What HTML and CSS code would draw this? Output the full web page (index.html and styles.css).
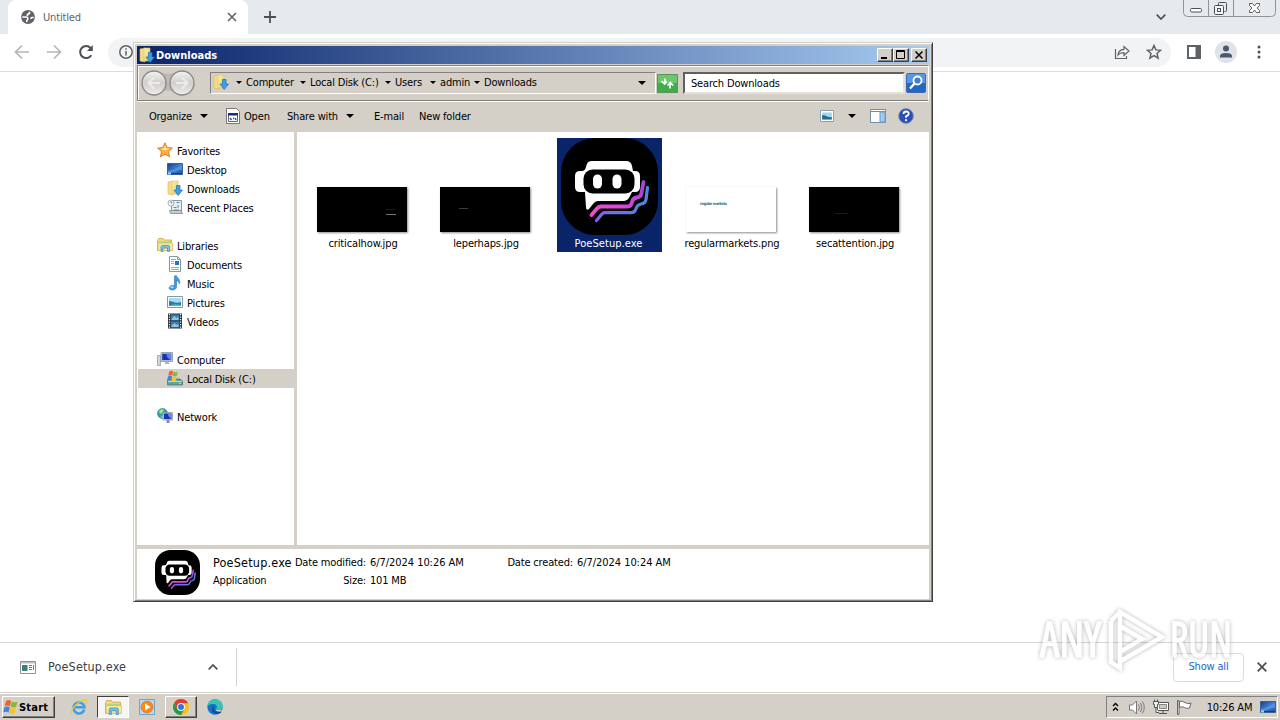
FILE: index.html
```html
<!DOCTYPE html>
<html lang="en">
<head>
  <meta charset="UTF-8">
  <title>Untitled</title>
  <link rel="stylesheet" href="styles.css">
</head>
<body>
  <!-- shared icons -->
  <svg class="defs" width="0" height="0">
    <defs>
      <linearGradient id="gFolder" x1="0" x2="1" y1="0" y2="1"><stop offset="0" stop-color="#fdf3b5"/><stop offset="1" stop-color="#e9c75c"/></linearGradient>
      <linearGradient id="gBlue" x1="0" x2="1" y1="0" y2="1"><stop offset="0" stop-color="#173b8c"/><stop offset=".5" stop-color="#3f7fd0"/><stop offset="1" stop-color="#1c51a8"/></linearGradient>
      <linearGradient id="gPoe" gradientUnits="userSpaceOnUse" x1="30" x2="88" y1="0" y2="0"><stop offset="0" stop-color="#f24bd0"/><stop offset=".6" stop-color="#d845e0"/><stop offset="1" stop-color="#9248d0"/></linearGradient>
      <linearGradient id="gPoe2" gradientUnits="userSpaceOnUse" x1="32" x2="88" y1="0" y2="0"><stop offset="0" stop-color="#8a5cf0"/><stop offset="1" stop-color="#4a8bd8"/></linearGradient>
      <symbol id="downloads" viewBox="0 0 16 16">
        <path d="M1 2l5-1v14l-5-1z" fill="#f4dd86" stroke="#d9b54c" stroke-width=".6"/>
        <path d="M5 1h6v13H5z" fill="url(#gFolder)" stroke="#dcc067" stroke-width=".6"/>
        <path d="M9.500 5.500h3.500v4.500h2.500L11.200 15.500 7 10h2.500z" fill="#3aa0e8" stroke="#1d6fb8" stroke-width=".7"/>
      </symbol>
      <symbol id="desktop" viewBox="0 0 16 16">
        <path d="M.5 2.500h15v11H.5z" fill="url(#gBlue)" stroke="#3b5f9a"/>
        <path d="M1 10c5 0 9-3 14-6v5C10 9 6 11 1 12z" fill="#6fb0ee" opacity=".5"/>
        <path d="M1 12.500h14" stroke="#1c3d78"/><path d="M1 11.500h3v2H1z" fill="#a4d0f4"/>
      </symbol>
      <symbol id="star" viewBox="0 0 16 16">
        <path d="M8 .8l2.200 4.700 5.200.6-3.900 3.500 1.100 5.200L8 12.200l-4.600 2.600 1.100-5.200L.6 6.100l5.200-.6z" fill="#fbb13c" stroke="#d9761a" stroke-width=".9"/>
        <path d="M8 3l1.300 3.300 3.500.5L8 8.500 3.500 6.800l3.200-.5z" fill="#ffe49a"/>
      </symbol>
      <symbol id="recent" viewBox="0 0 16 16">
        <path d="M4.500 1.500h10v12h-10z" fill="#e9eef0" stroke="#8d989e"/>
        <path d="M2.500 11.500h11.500l1.500 3H3.500z" fill="#c5cdd0" stroke="#7f8a90" stroke-width=".8"/>
        <path d="M9.500 3.500h3M6.500 8.500h3M11 6v3M7 11h5" stroke="#5e88a4"/>
        <circle cx="4" cy="4" r="3" fill="#f6fafc" stroke="#8ea2ae" stroke-width=".8"/><path d="M4 2v2h1.500" stroke="#456" stroke-width=".7" fill="none"/>
      </symbol>
      <symbol id="library" viewBox="0 0 16 16">
        <path d="M.6 3.500l1-2h4.500l1 1.500h7.500v10.500H.6z" fill="#f2dc80" stroke="#c9a440" stroke-width=".8"/>
        <path d="M2 4.500h12v3H2z" fill="#a5d98e"/><path d="M1 6h14.500v7.500H1z" fill="#f8e79d" stroke="#d5b657" stroke-width=".6"/>
        <path d="M4 14.500V10q0-1.500 1.500-1.500h5.500q1.500 0 1.500 1.500v4.500h-2V11h-4.500v3.500z" fill="#7cc3ee" stroke="#3b86bd" stroke-width=".7"/>
      </symbol>
      <symbol id="document" viewBox="0 0 16 16">
        <path d="M2.500.5h8l3 3v12h-11z" fill="#fdfefe" stroke="#7d9aa8"/>
        <path d="M10.500.5v3h3" fill="none" stroke="#7d9aa8"/>
        <path d="M4 3.500h5M4 5.500h3M4 7.500h3M4 11.500h8M4 13.500h8" stroke="#8ab0cd"/><path d="M8 5h4v4H8z" fill="#2f6fb4"/>
      </symbol>
      <symbol id="music" viewBox="0 0 16 16">
        <path d="M7.500 1l1.800-.5c.5 2.500 4.500 3.500 3.200 8.500-.3-2-1.500-3-3-3.500v6.200c0 1.800-1.500 3.300-4 3.300C3 15 2 14 2.200 12.700c.3-1.700 2.800-2.700 5.300-2z" fill="#3a9de6" stroke="#1f6fb8" stroke-width=".6"/>
        <ellipse cx="5" cy="12.300" rx="1.800" ry="1" fill="#a8daf8"/>
      </symbol>
      <symbol id="picture" viewBox="0 0 16 16">
        <path d="M.5 2.500h15v11H.5z" fill="#fff" stroke="#8298a4"/><path d="M2 4h12v8H2z" fill="#a5dcf2"/>
        <path d="M2 12V7c4 0 6 3 12 1v4z" fill="#287c9e"/><path d="M2 12c4-2 8-2 12-1v1z" fill="#4fb4c9"/>
      </symbol>
      <symbol id="video" viewBox="0 0 16 16">
        <path d="M1 .5h14v15H1z" fill="#27323c"/><path d="M4 1.500h8v6H4zM4 8.500h8v6H4z" fill="#3f7fb0"/>
        <path d="M4.500 6l3-3 2 2 2-1v3h-7zM4.500 13l3-3 2 2 2-1v3h-7z" fill="#8dc3e0"/>
        <path d="M2.500 1v14M13.500 1v14" stroke="#e8f0f4" stroke-width="1.300" stroke-dasharray="1.300 1.200"/>
      </symbol>
      <symbol id="computer" viewBox="0 0 16 16">
        <path d="M.5 4.500h3v10h-3z" fill="#d2d5d8" stroke="#8d9399" stroke-width=".7"/>
        <path d="M4 1.500h11.500v9H4z" fill="#cfd6de" stroke="#8a929c" stroke-width=".8"/><path d="M5.200 2.700h9v6.500h-9z" fill="#1a2fae"/>
        <path d="M9.500 2.700h4.700v6.500c-3-1-4.700-3-4.700-6.500z" fill="#5a80ea"/><path d="M8.500 10.500h3l1 2.500h-5z" fill="#adb4bc"/>
      </symbol>
      <symbol id="flag" viewBox="0 0 16 16">
        <path d="M3 2c2-1.200 3.500-1.200 5.200 0L7 7.500C5.500 6.300 3.500 6.300 1.700 7.300z" fill="#f0642a"/>
        <path d="M8.900 2.400c2 1 3.800 1 5.600 0l-1.300 5.400c-1.800 1-3.500 1-5.500 0z" fill="#7cbc3a"/>
        <path d="M1.500 8.200c1.800-1 3.700-1 5.300.1L5.500 13.700C4 12.600 2 12.600.2 13.500z" fill="#3f86dd"/>
        <path d="M7.500 8.600c2 1 3.700 1 5.500.1l-1.300 5.400c-1.800 1-3.500 1-5.500-.1z" fill="#fbc22c"/>
      </symbol>
      <symbol id="disk" viewBox="0 0 16 16">
        <path d="M1 9h12l2.500 2v4H.5v-4z" fill="#5ea79d" stroke="#5a6f74" stroke-width=".8"/><path d="M1 11.500h14" stroke="#b9dcd6"/>
        <svg x="0" y="0" width="12" height="12"><use href="#flag"/></svg><path d="M12 13.500h2" stroke="#9f6"/>
      </symbol>
      <symbol id="network" viewBox="0 0 16 16">
        <circle cx="5.500" cy="5.500" r="5" fill="#2f9fb8" stroke="#26788f" stroke-width=".6"/><path d="M2 3c2-2 4-2 5-1L5 5 3 6zM4 8l3-1 1 2-3 1z" fill="#a4e08a"/>
        <path d="M6 4.500h9.500v7.500H6z" fill="#c9d2dc" stroke="#87909a" stroke-width=".7"/><path d="M7 5.500h7.500v5.500H7z" fill="#1933b8"/><path d="M11 5.500h3.500v5.500c-2-1-3.500-3-3.500-5.500z" fill="#6b8df0"/>
        <path d="M9.500 12h3v3h-3z" fill="#7f8cab"/>
      </symbol>
      <symbol id="poe" viewBox="0 0 97 97">
        <rect width="97" height="97" rx="34" fill="#000"/>
        <path d="M30 23h35q5 0 6 5l1 5h2q5 0 5 5v11q0 5-5 5h-3l-2 4q-2 5-7 5H37q-3 0-5 3l-4 5q-3 2-3-2l-1-15h-5q-5 0-5-5V38q0-5 5-5h2q3 0 4-4 1-6 5-6z" fill="#fff"/>
        <rect x="22.500" y="31.500" width="51" height="24" rx="9" fill="#000"/>
        <rect x="32" y="36.500" width="9" height="14" rx="4.500" fill="#fff"/><rect x="51.500" y="36.500" width="9" height="14" rx="4.500" fill="#fff"/>
        <path d="M30.500 77l6-7q1.500-1.500 3.500-1.500h27q3 0 4-4.500 1-4 5-4.500 4-.5 4.500-4.500l2-11" fill="none" stroke="url(#gPoe)" stroke-width="3.800" stroke-linecap="round" stroke-linejoin="round"/>
        <path d="M35.500 82.500l5-6q1.500-1.800 3.500-1.800h26q4 0 5-4t5-4.700q4.500-.7 5-4.500l1.500-12" fill="none" stroke="url(#gPoe2)" stroke-width="3.200" stroke-linecap="round" stroke-linejoin="round"/>
      </symbol>
    </defs>
  </svg>

  <div class="screen">
    <div class="tabstrip">
      <div class="tab">
        <svg class="globe" width="14" height="14" viewBox="0 0 14 14"><circle cx="7" cy="7" r="6.900" fill="#5f6368"/><path d="M1.300 7h4q1.500 0 1.500 1.500v1l-1 1V12M8.500 1.800v1.500L6.500 4.500v1.500M9.500 8.500l1.500-1h1.700" fill="none" stroke="#fff" stroke-width="1.600"/></svg>
        <span class="tab-title">Untitled</span>
        <svg width="10" height="10" viewBox="0 0 10 10" stroke="#5f6368" stroke-width="1.600"><path d="M1 1l8 8M9 1L1 9"/></svg>
      </div>
      <svg class="newtab" width="12" height="12" viewBox="0 0 12 12" stroke="#4c5055" stroke-width="1.800"><path d="M6 0v12M0 6h12"/></svg>
      <svg class="tabsearch" width="10" height="6" viewBox="0 0 10 6" fill="none" stroke="#4c5055" stroke-width="1.700"><path d="M.7.7L5 5 9.300.7"/></svg>
      <svg class="winbtns" width="93" height="17" viewBox="0 0 93 17" fill="none" stroke="#8f949a">
        <path d="M.5 0v12.500q0 4 4 4h84q4 0 4-4V0M25.500 0v16M50.500 0v16"/>
        <rect x="7.500" y="8.500" width="11" height="3.500" rx="1.200" fill="#fff" stroke="#4a4f57"/>
        <path d="M35.500 5.500V3.500q0-1 1-1h6q1 0 1 1v7q0 1-1 1h-1" stroke="#4a4f57"/><rect x="31.500" y="5.500" width="9" height="9" rx="1" fill="#f6f7f9" stroke="#4a4f57"/><rect x="34.500" y="8.500" width="3" height="3" stroke="#4a4f57"/>
        <path d="M66.500 3.500h3l2 2.500 2-2.500h3v2l-2.500 2.500 2.500 2.500v2h-3l-2-2.500-2 2.500h-3v-2L69 8l-2.500-2.500z" fill="#fff" stroke="#4a4f57" stroke-width=".9"/>
      </svg>
    </div>

    <div class="toolbar">
      <svg width="16" height="16" viewBox="0 0 16 16" fill="none" stroke="#b4b7ba" stroke-width="1.700"><path d="M15 8H2M8 1.500L1.500 8 8 14.500"/></svg>
      <svg width="16" height="16" viewBox="0 0 16 16" fill="none" stroke="#b4b7ba" stroke-width="1.700"><path d="M1 8h13M8 1.500L14.500 8 8 14.500"/></svg>
      <svg width="16" height="16" viewBox="0 0 16 16" fill="none" stroke="#4c5055" stroke-width="2"><path d="M13.300 11.200A6 6 0 1 1 12.600 4"/><path d="M14.800 1v6H9z" fill="#4c5055" stroke="none"/></svg>
      <div class="omnibox">
        <svg width="14" height="14" viewBox="0 0 14 14" fill="none" stroke="#5f6368" stroke-width="1.500"><circle cx="7" cy="7" r="6.200"/><path d="M7 6v4.500M7 3.200v1.500"/></svg>
        <svg class="share" width="16" height="16" viewBox="0 0 16 16" fill="none" stroke="#5f6368" stroke-width="1.200"><path d="M1.500 5v9.500h11V12M4 11c.3-4 2.500-5.500 6-5.700V2.500L15 7l-5 4.500V8.600C7.500 8.500 5.500 9 4 11z"/></svg>
        <svg width="16" height="16" viewBox="0 0 16 16" fill="none" stroke="#5f6368" stroke-width="1.500"><path d="M8 1.500l1.900 4.400 4.700.4-3.600 3.100 1.100 4.700L8 11.600l-4.100 2.500L5 9.400 1.400 6.300l4.700-.4z"/></svg>
      </div>
      <svg class="panel" width="14" height="14" viewBox="0 0 14 14"><path d="M1 1h12v12H1z" fill="none" stroke="#5f6368" stroke-width="2"/><path d="M8.500 1H13v12H8.500z" fill="#5f6368"/></svg>
      <svg class="avatar" width="22" height="22" viewBox="0 0 22 22"><circle cx="11" cy="11" r="11" fill="#dfe2e7"/><circle cx="11" cy="7.500" r="3" fill="#4b5670"/><path d="M5 16.500v-1.500q0-3 6-3t6 3v1.500z" fill="#4b5670"/></svg>
      <svg class="dots" width="4" height="14" viewBox="0 0 4 14" fill="#4c5055"><circle cx="2" cy="2" r="1.500"/><circle cx="2" cy="7" r="1.500"/><circle cx="2" cy="12" r="1.500"/></svg>
    </div>

    <div class="page"></div>

    <div class="shelf">
      <div class="shelf-item">
        <svg width="16" height="13" viewBox="0 0 16 13"><path d="M.5.500h15v12H.5z" fill="#fff" stroke="#8c9296"/><path d="M1 1h14v1.500H1z" fill="#b7bec4"/><path d="M2 4h5.500v6H2z" fill="#3f7d7a"/><path d="M9 4.500h3M9 6.500h3M9 8.500h3M13.500 4v5" stroke="#777"/></svg>
        <span class="shelf-name">PoeSetup.exe</span>
        <svg width="10" height="6" viewBox="0 0 10 6" fill="none" stroke="#4c5055" stroke-width="1.700"><path d="M.7 5.300L5 1l4.300 4.300"/></svg>
      </div>
      <div class="show-all">Show all</div>
      <svg width="10" height="10" viewBox="0 0 10 10" stroke="#4c5055" stroke-width="1.800"><path d="M.7.7l8.600 8.600M9.300.7L.7 9.300"/></svg>
    </div>

    <div class="taskbar">
      <div class="start"><svg width="16" height="16"><use href="#flag"/></svg><b>Start</b></div>
      <div class="task ie"><svg width="18" height="16" viewBox="0 0 18 16" fill="none"><path d="M14.300 10.500A5.500 5.500 0 1 1 14.500 8.300H5" stroke="#3f9fe0" stroke-width="2.600"/><path d="M2 14.500C-1 12 9 0 16 1.200c2 .8 0 4-1 5" stroke="#f0c445" stroke-width="1.300"/></svg></div>
      <div class="task pressed"><svg width="17" height="17"><use href="#library"/></svg></div>
      <div class="task"><svg width="16" height="16" viewBox="0 0 16 16"><path d="M.5.500h15v15H.5z" fill="#b7d9f3" stroke="#6da3cf"/><circle cx="8" cy="8" r="6" fill="#f58a1f" stroke="#d76a0c" stroke-width=".6"/><path d="M6 4.500l5.500 3.500L6 11.500z" fill="#fff"/></svg></div>
      <div class="task raised"><svg width="16" height="16" viewBox="0 0 16 16"><circle cx="8" cy="8" r="8" fill="#fbc116"/><path d="M1.070 4A8 8 0 0 0 8 16l3.500-6L8 8 4.500 10z" fill="#229a48"/><path d="M8 4.300h7.100L14.930 4A8 8 0 0 0 1.070 4L4.500 10z" fill="#e33b2e"/><circle cx="8" cy="8" r="3.900" fill="#fff"/><circle cx="8" cy="8" r="3" fill="#2f77e8"/></svg></div>
      <div class="task"><svg width="16" height="16" viewBox="0 0 16 16"><circle cx="8" cy="8" r="7.700" fill="#1473c8"/><path d="M.5 7C1 2.500 4.500.3 8 .3c4.500 0 7.700 3 7.700 6.700 0 2.500-2 3.700-4 3.700-1.500 0-2.700-.7-2-1.700 1-2-1-4-3.500-4C4 5 1.500 5.500.5 7z" fill="#38c4b0"/><path d="M6.500 9c0 3 3 5 7 3.800 1-.3 1.200 0 .5.700-3.500 3-9 1-9-3.500 0-2 1-3 2.500-3.500-.6.600-1 1.500-1 2.500z" fill="#0c4b92"/><path d="M8.800 10c1.200 1.200 3.700 1.300 6 .2l-.8 2C10.500 13 8.500 12 8.800 10z" fill="#d4d0c8"/></svg></div>
      <div class="tray">
        <svg width="7" height="10" viewBox="0 0 7 10" fill="none" stroke="#000" stroke-width="1.400"><path d="M1 4l2.500-2.500L6 4M1 8.500L3.500 6 6 8.500"/></svg>
        <svg class="snd" width="16" height="15" viewBox="0 0 16 15" fill="none" stroke="#77797b"><path d="M.5 5h3l4-4v13l-4-4h-3z" fill="#fff"/><path d="M9.500 4.500q2 3 0 6M11.500 3q3 4.500 0 9M13.300 1.500q4 6 0 12"/></svg>
        <svg class="net" width="16" height="16" viewBox="0 0 16 16" stroke="#555"><path d="M4.500 3.500h11v8h-11z" fill="#fff"/><path d="M6.500 5.500h7v4h-7z" fill="#c9cbcb" stroke="#888"/><path d="M10 12v2M6 14.500h8" /><path d="M.5 2.500h5v3h-1v3h-3v-3h-1zM1.500.500v2M4.500.500v2M3 8.500v5h3" fill="#f2f2f2"/></svg>
        <svg class="flg" width="16" height="15" viewBox="0 0 16 15" stroke="#66686a" fill="#fff"><path d="M.5.500h1.500v14H.5zM2.500 1.500q3-1 5.500 1t6 .500l-1.500 5q-3 1-5-.5t-5 0z"/></svg>
        <span class="clock">10:26 AM</span>
        <svg width="16" height="16"><use href="#desktop"/></svg>
      </div>
    </div>

    <div class="window">
      <div class="titlebar">
        <svg width="16" height="16"><use href="#downloads"/></svg>
        <b>Downloads</b>
        <div class="wbtn"><svg width="12" height="12"><path d="M3 9h6" stroke="#000" stroke-width="2"/></svg></div>
        <div class="wbtn"><svg width="14" height="12"><path d="M2.500 1.500h8v8h-8zM2 2.500h9" fill="none" stroke="#000"/></svg></div>
        <div class="wbtn close"><svg width="14" height="12"><path d="M3.500 2.500l7 7M10.500 2.500l-7 7" stroke="#000" stroke-width="1.500"/></svg></div>
      </div>

      <div class="addressbar">
        <svg class="nav" width="56" height="28" viewBox="0 0 56 28"><defs><linearGradient id="gNav" x2="0" y2="1"><stop offset="0" stop-color="#f3f3f1"/><stop offset=".5" stop-color="#cfcecb"/><stop offset="1" stop-color="#efeeec"/></linearGradient></defs>
          <path d="M14 2q14 5 28 0v22q-14-5-28 0z" fill="#bdbab4"/>
          <g fill="url(#gNav)" stroke="#8b8985" stroke-width="1.300"><circle cx="14" cy="14" r="12"/><circle cx="42" cy="14" r="12"/></g>
          <g fill="none" stroke="#ececea" stroke-width="2"><path d="M20 14H9M14 8.500L8.500 14l5.500 5.500M36 14h11M42 8.500l5.500 5.500-5.500 5.500"/></g></svg>
        <div class="crumbs">
          <svg width="16" height="16"><use href="#downloads"/></svg>
          <i class="arrow a0"></i><span class="c1">Computer</span>
          <i class="arrow"></i><span class="c2">Local Disk (C:)</span>
          <i class="arrow"></i><span class="c3">Users</span>
          <i class="arrow"></i><span class="c4">admin</span>
          <i class="arrow"></i><span class="c5">Downloads</span>
          <i class="arrow big"></i>
        </div>
        <svg class="refresh" width="21" height="19" viewBox="0 0 21 19"><path d="M.5.500h20v18H.5z" fill="#3fae49" stroke="#5f8f62"/><path d="M1 1h19v8H1z" fill="#6cc66c"/><path d="M8 4.500v5M4.500 7L7.700 10l2.300-2.500M13 14.500v-5M10.500 11.500L13.300 8.500l3 3" fill="none" stroke="#fff" stroke-width="1.700"/></svg>
        <div class="search">Search Downloads</div>
        <svg class="go" width="20" height="20" viewBox="0 0 20 20"><rect x=".5" y=".5" width="19" height="19" rx="1.500" fill="#2367c4" stroke="#3c6db0"/><path d="M1 1h18v9H1z" fill="#5a96e2"/><circle cx="11.500" cy="7.500" r="4" fill="#3b80d6" stroke="#fff" stroke-width="1.800"/><path d="M8.500 10.500L4 15.500" stroke="#fff" stroke-width="2.400"/></svg>
      </div>

      <div class="commands">
        <span class="organize">Organize</span><i class="arrow big"></i>
        <svg class="open-ic" width="14" height="16" viewBox="0 0 14 16"><path d="M.5.500h10l3 3v12H.5z" fill="#fff" stroke="#777"/><path d="M2.500 5.500h9v8h-9z" fill="#fff" stroke="#667"/><path d="M2 5h10v2.500H2z" fill="#1a2c8a"/><path d="M4 10l1.500 2M7 10.500h1M9 10l1 2" stroke="#2255aa" stroke-width="1.500"/></svg>
        <span class="open">Open</span><span class="sharew">Share with</span><i class="arrow big"></i>
        <span class="email">E-mail</span><span class="newf">New folder</span>
        <svg class="view" width="14" height="12" viewBox="0 0 16 12" preserveAspectRatio="none"><path d="M.5.500h15v11H.5z" fill="#fff" stroke="#8a97a2"/><path d="M2.500 2.500h11v7h-11z" fill="#a0d6ee"/><path d="M2.500 9.500V5c4 0 6 3 11 2v2.500z" fill="#1f6d8e"/></svg>
        <i class="arrow big"></i>
        <svg class="preview" width="16" height="14" viewBox="0 0 16 14"><path d="M.5.500h15v13H.5z" fill="#fff" stroke="#6c8db0"/><path d="M1 2.500h14" stroke="#6c8db0"/><path d="M10 3h5v10h-5z" fill="#9dcbed" stroke="#6c9cc8"/></svg>
        <svg width="16" height="16" viewBox="0 0 16 16"><circle cx="8" cy="8" r="7.400" fill="#2b4fb4" stroke="#8a93b0"/><path d="M5.500 6q0-2.500 2.700-2.500T10.700 6Q10.500 7.300 8 8.300v1.500" fill="none" stroke="#fff" stroke-width="1.800"/><circle cx="8" cy="12.200" r="1.100" fill="#fff"/></svg>
      </div>

      <div class="content">
        <div class="tree">
          <div class="node"><svg><use href="#star"/></svg><span>Favorites</span></div>
          <div class="node sub"><svg><use href="#desktop"/></svg><span>Desktop</span></div>
          <div class="node sub"><svg><use href="#downloads"/></svg><span>Downloads</span></div>
          <div class="node sub gap"><svg><use href="#recent"/></svg><span>Recent Places</span></div>
          <div class="node"><svg><use href="#library"/></svg><span>Libraries</span></div>
          <div class="node sub"><svg><use href="#document"/></svg><span>Documents</span></div>
          <div class="node sub"><svg><use href="#music"/></svg><span>Music</span></div>
          <div class="node sub"><svg><use href="#picture"/></svg><span>Pictures</span></div>
          <div class="node sub gap"><svg><use href="#video"/></svg><span>Videos</span></div>
          <div class="node"><svg><use href="#computer"/></svg><span>Computer</span></div>
          <div class="node sub selected"><svg><use href="#disk"/></svg><span>Local Disk (C:)</span></div>
          <div class="node last"><svg><use href="#network"/></svg><span>Network</span></div>
        </div>
        <div class="files">
          <div class="file"><div class="thumb"><svg width="90" height="45"><path d="M69 27.500h10" stroke="#777"/><path d="M68 22.500h10" stroke="#181818"/></svg></div><span>criticalhow.jpg</span></div>
          <div class="file"><div class="thumb"><svg width="90" height="45"><path d="M19 21.500h9" stroke="#3c3c3c"/></svg></div><span>leperhaps.jpg</span></div>
          <div class="file active"><svg width="97" height="97"><use href="#poe"/></svg><span>PoeSetup.exe</span></div>
          <div class="file"><div class="thumb light"><small>regular markets</small></div><span>regularmarkets.png</span></div>
          <div class="file"><div class="thumb"><svg width="90" height="45"><path d="M26 26.500h13" stroke="#141c3c"/></svg></div><span>secattention.jpg</span></div>
        </div>
      </div>

      <div class="details">
        <svg width="45" height="45"><use href="#poe"/></svg>
        <div class="d-name"><span class="big-name">PoeSetup.exe</span><span>Application</span></div>
        <div class="d-keys"><span>Date modified:</span><span>Size:</span></div>
        <div class="d-vals"><span class="date">6/7/2024 10:26 AM</span><span>101 MB</span></div>
        <div class="d-keys created"><span>Date created:</span></div>
        <div class="d-vals"><span class="date">6/7/2024 10:24 AM</span></div>
      </div>
    </div>

    <svg class="watermark" width="200" height="66" viewBox="0 0 200 66">
      <text x="4" y="50" textLength="61" lengthAdjust="spacingAndGlyphs">ANY</text>
      <text x="134" y="50" textLength="62" lengthAdjust="spacingAndGlyphs">RUN</text>
      <path d="M75 14v41l9 6V5l42 25-42 24.500M75 14l9-9M84 19l22 13-22 13" fill="none" stroke-width="4.500"/>
    </svg>
  </div>
</body>
</html>
```

FILE: styles.css
```css
* {
  box-sizing: border-box;
}

body {
  margin: 0;
  font-family: "DejaVu Sans Condensed", "DejaVu Sans", sans-serif;
  font-stretch: condensed;
  font-size: 11px;
  letter-spacing: -0.17px;
  color: #000;
}

svg {
  flex: none;
  display: block;
}

span, b {
  white-space: nowrap;
}

.defs {
  position: absolute;
}

.screen {
  position: relative;
  width: 1280px;
  height: 720px;
  overflow: hidden;
  display: flex;
  flex-direction: column;
  background: #fff;
}

/* browser */
.tabstrip {
  height: 34px;
  background: #e7eaed;
  display: flex;
  align-items: flex-start;
  padding-left: 8px;
}

.tab {
  width: 240px;
  height: 34px;
  background: #fff;
  border-radius: 8px 8px 0 0;
  display: flex;
  align-items: center;
  padding: 0 11px 0 13px;
}

.tab-title {
  color: #5f6368;
  margin-left: 8px;
  flex: 1;
}

.newtab {
  margin: 11px 0 0 16px;
}

.tabsearch {
  margin: 14px 17px 0 auto;
}

.winbtns {
  margin-right: 4px;
}

.toolbar {
  height: 38px;
  border-bottom: 1px solid #dadce0;
  display: flex;
  align-items: center;
  padding: 0 19px 1px 14px;
  gap: 16px;
}

.omnibox {
  height: 29px;
  width: 1063px;
  margin-left: -2px;
  border-radius: 15px;
  background: #f1f3f4;
  display: flex;
  align-items: center;
  padding: 0 9px 0 11px;
  gap: 16px;
}

.share {
  margin-left: auto;
}

.panel {
  margin-left: 0;
}

.avatar {
  margin-left: -2px;
}

.dots {
  margin-left: 4px;
}

.page {
  flex: 1;
}

.shelf {
  height: 50px;
  border-top: 1px solid #d5d7da;
  display: flex;
  align-items: center;
  padding: 0 13px 1px 0;
}

.shelf-item {
  width: 237px;
  height: 38px;
  border-right: 1px solid #d0d2d5;
  display: flex;
  align-items: center;
  padding: 0 18px 0 20px;
}

.shelf-name {
  font-size: 12.5px;
  letter-spacing: 0.15px;
  color: #3c4043;
  flex: 1;
  margin-left: 12px;
  padding-bottom: 2px;
}

.show-all {
  width: 71px;
  height: 29px;
  margin-left: auto;
  margin-right: 13px;
  border: 1px solid #dadce0;
  border-radius: 4px;
  color: #1a66d0;
  text-align: center;
  line-height: 25px;
}

/* taskbar */
.taskbar {
  height: 28px;
  background: #d4d0c8;
  border-top: 1px solid #d4d0c8;
  box-shadow: inset 0 1px #fff;
  display: flex;
  align-items: center;
  padding: 1px 2px 0;
}

.start {
  width: 53px;
  height: 22px;
  border: 1px solid;
  border-color: #fff #404040 #404040 #fff;
  box-shadow: inset -1px -1px #808080;
  display: flex;
  align-items: center;
  letter-spacing: 0.2px;
}

.task {
  width: 32px;
  height: 22px;
  margin-right: 2px;
  display: flex;
  align-items: center;
  justify-content: center;
}

.ie {
  margin-left: 8px;
}

.pressed {
  background: #f6f5f3;
  border: 1px solid;
  border-color: #404040 #fff #fff #404040;
}

.raised {
  border: 1px solid;
  border-color: #fff #404040 #404040 #fff;
  box-shadow: inset -1px -1px #808080;
}

.tray {
  width: 172px;
  height: 22px;
  margin-left: auto;
  border: 1px solid;
  border-color: #808080 #fff #fff #808080;
  display: flex;
  align-items: center;
  padding: 0 1px 0 5px;
}

.snd {
  margin-left: 10px;
}

.net, .flg {
  margin-left: 8px;
}

.clock {
  margin: 0 auto;
  padding-left: 6px;
}

/* explorer */
.window {
  position: absolute;
  left: 133px;
  top: 42px;
  width: 800px;
  height: 560px;
  background: #d4d0c8;
  border: 1px solid;
  border-color: #d4d0c8 #404040 #404040 #d4d0c8;
  box-shadow: inset 1px 1px #fff, inset -1px -1px #808080;
  padding: 3px 3px 2px;
  display: flex;
  flex-direction: column;
}

.titlebar {
  height: 18px;
  background: linear-gradient(to right, #0a246a, #a6caf0);
  color: #fff;
  display: flex;
  align-items: center;
  padding: 0 2px;
}

.titlebar b {
  flex: 1;
  margin-left: 1px;
  letter-spacing: 0.02px;
}

.wbtn {
  width: 16px;
  height: 14px;
  background: #d4d0c8;
  border: 1px solid;
  border-color: #fff #404040 #404040 #fff;
  box-shadow: inset -1px -1px #808080;
}

.close {
  margin-left: 2px;
}

.addressbar {
  height: 36px;
  margin-top: 1px;
  border: 1px solid;
  border-color: #808080 #fff #808080 #808080;
  box-shadow: inset 1px 1px #fff, 0 1px #fff;
  display: flex;
  align-items: center;
  padding-left: 2px;
}

.crumbs {
  width: 446px;
  height: 22px;
  margin-left: 14px;
  border: 1px solid;
  border-color: #808080 #fff #fff #808080;
  display: flex;
  align-items: center;
  padding: 0 0 1px 2px;
}

.crumbs svg {
  margin-top: -1px;
}

.arrow {
  flex: none;
  border: 3px solid transparent;
  border-top-color: #000;
  border-bottom: 0;
}

.arrow.big {
  border-width: 4px 4px 0;
}

.crumbs .arrow {
  margin: 0 4px 0 5px;
}

.crumbs .a0 {
  margin-left: 7px;
}

.c1 {
  width: 49px;
}

.c2 {
  width: 70px;
}

.c3 {
  width: 30px;
}

.c4 {
  width: 29px;
}

.crumbs .big {
  margin: 0 9px 0 auto;
}

.refresh {
  margin-left: 1px;
}

.search {
  width: 222px;
  height: 22px;
  margin-left: 5px;
  background: #fff;
  border: 2px solid;
  border-color: #606060 #e4e1dc #e4e1dc #606060;
  line-height: 20px;
  padding-left: 6px;
}

.go {
  margin-left: 1px;
}

.commands {
  height: 31px;
  display: flex;
  align-items: center;
  padding: 0 15px 1px 12px;
}

.organize {
  width: 51px;
}

.open-ic {
  margin: 0 4px 0 18px;
}

.open {
  width: 43px;
}

.sharew {
  width: 59px;
}

.email {
  margin-left: 20px;
  width: 45px;
}

.view {
  margin-left: auto;
  margin-right: 14px;
}

.preview {
  margin: 0 12px 0 14px;
}

.content {
  height: 413px;
  display: flex;
  gap: 3px;
}

.tree {
  width: 157px;
  background: #fff;
  padding: 9px 0 0 1px;
}

.node {
  height: 19px;
  display: flex;
  align-items: center;
  padding-left: 19px;
}

.node svg {
  width: 16px;
  height: 16px;
  margin: 0 4px 1px 0;
}

.node span {
  padding-top: 1px;
}

.sub {
  padding-left: 29px;
}

.gap {
  margin-bottom: 19px;
}

.selected {
  background: #d4d0c8;
}

.last {
  margin-top: 19px;
}

.files {
  flex: 1;
  background: #fff;
  display: flex;
  align-items: flex-start;
  gap: 18px;
  padding: 6px 0 0 14px;
}

.file {
  width: 105px;
  height: 114px;
  display: flex;
  flex-direction: column;
  align-items: center;
  justify-content: flex-end;
}

.file span {
  line-height: 17px;
  letter-spacing: -0.13px;
  padding-right: 1px;
}

.active {
  background: #0a246a;
  color: #fff;
}

.active span {
  letter-spacing: 0.05px;
  padding-right: 2px;
}

.thumb {
  width: 90px;
  height: 45px;
  margin: 0 3px 3px 0;
  background: #000;
  box-shadow: 1px 1px 2px rgba(0, 0, 0, 0.45);
}

.light {
  background: #fff;
}

.light small {
  display: block;
  font-size: 4px;
  font-weight: bold;
  letter-spacing: -0.4px;
  color: #3b7286;
  padding: 14px 0 0 14px;
}

.details {
  height: 50px;
  margin-top: 4px;
  background: #fff;
  display: flex;
  padding: 1px 0 0 18px;
}

.details div {
  display: flex;
  flex-direction: column;
  line-height: 18px;
  padding-top: 4px;
}

.details .d-name {
  width: 83px;
  margin-left: 13px;
}

.details .big-name {
  font-size: 12.5px;
  letter-spacing: 0.2px;
  line-height: 17px;
  margin-bottom: 1px;
}

.d-keys {
  width: 70px;
  align-items: flex-end;
}

.d-vals {
  width: 136px;
  margin-left: 4px;
}

.date {
  letter-spacing: -0.05px;
}

.created {
  width: 67px;
}

.watermark {
  position: absolute;
  left: 1036px;
  top: 607px;
  overflow: visible;
  font-family: "Open Sans", sans-serif;
  font-size: 49px;
  letter-spacing: 0;
  fill: #fff;
  stroke: #fff;
  stroke-width: 1.5;
  filter: drop-shadow(0 0 2px rgba(0, 0, 0, 0.45));
  opacity: 0.65;
}
```
